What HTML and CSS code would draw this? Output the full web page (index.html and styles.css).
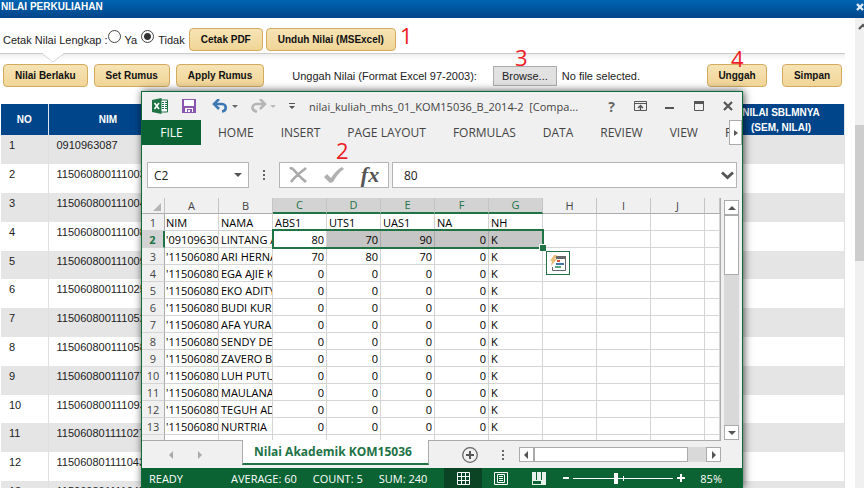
FILE: index.html
```html
<!DOCTYPE html>
<html lang="id">
<head>
  <meta charset="UTF-8" />
  <meta name="viewport" content="width=device-width, initial-scale=1.0"/>
  <title>Nilai Perkuliahan</title>
  <link rel="stylesheet" href="styles.css">
</head>
<body>
  <header class="titlebar">
    <h1>NILAI PERKULIAHAN</h1>
    <button class="close-page" aria-label="Tutup">
      <svg width="8" height="8" viewBox="0 0 8 8"><path d="M1 1l6 6M7 1l-6 6" stroke="#e4edf6" stroke-width="2.4"/></svg>
    </button>
  </header>

  <div class="content">
    <main class="page">
      <form class="toolbar print-bar">
        <span class="lbl">Cetak Nilai Lengkap :</span>
        <input type="radio" name="lengkap" id="ya"><label for="ya">Ya</label>
        <input type="radio" name="lengkap" id="tidak" checked><label for="tidak">Tidak</label>
        <button type="button" class="btn">Cetak PDF</button>
        <button type="button" class="btn">Unduh Nilai (MSExcel)</button>
        <svg class="notch" width="22" height="10" viewBox="0 0 22 10"><path d="M0 0h22L11 9z" fill="#fff"/><path d="M0 .5L11 9L22 .5" fill="none" stroke="#d5d5d5"/></svg>
      </form>

      <form class="toolbar upload-bar">
        <button type="button" class="btn">Nilai Berlaku</button>
        <button type="button" class="btn">Set Rumus</button>
        <button type="button" class="btn">Apply Rumus</button>
        <span class="upload-label">Unggah Nilai (Format Excel 97-2003):</span>
        <label class="browse" for="berkas">Browse...</label>
        <input type="file" id="berkas" class="file-input">
        <span class="file-name">No file selected.</span>
        <button type="button" class="btn small unggah">Unggah</button>
        <button type="button" class="btn small">Simpan</button>
      </form>

      <table class="grades">
        <colgroup><col class="c-no"><col class="c-nim"><col><col class="c-prev"></colgroup>
        <thead>
          <tr><th>NO</th><th>NIM</th><th></th><th>NILAI SBLMNYA<br>(SEM, NILAI)</th></tr>
        </thead>
        <tbody>
          <tr><td>1</td><td>0910963087</td><td></td><td></td></tr>
          <tr><td>2</td><td>115060800111003</td><td></td><td></td></tr>
          <tr><td>3</td><td>115060800111004</td><td></td><td></td></tr>
          <tr><td>4</td><td>115060800111008</td><td></td><td></td></tr>
          <tr><td>5</td><td>115060800111009</td><td></td><td></td></tr>
          <tr><td>6</td><td>115060800111025</td><td></td><td></td></tr>
          <tr><td>7</td><td>115060800111052</td><td></td><td></td></tr>
          <tr><td>8</td><td>115060800111058</td><td></td><td></td></tr>
          <tr><td>9</td><td>115060800111077</td><td></td><td></td></tr>
          <tr><td>10</td><td>115060800111093</td><td></td><td></td></tr>
          <tr><td>11</td><td>115060801111027</td><td></td><td></td></tr>
          <tr><td>12</td><td>115060801111043</td><td></td><td></td></tr>
          <tr><td>13</td><td>115060801111045</td><td></td><td></td></tr>
        </tbody>
      </table>
    </main>

    <div class="page-scroll">
      <svg width="9" height="18" viewBox="0 0 9 18"><path d="M4 11l4-4 4 4" fill="none" stroke="#555" stroke-width="2.2"/></svg>
      <div class="page-thumb"></div>
    </div>
  </div>

  <!-- Excel window -->
  <section class="excel">
    <div class="x-title">
      <span class="x-ico">
        <svg width="16" height="16" viewBox="0 0 16 16"><path d="M9 2h6.500v12H9" fill="#fff" stroke="#1f7244"/><path d="M10 4.500h2M13 4.500h2M10 6.500h2M13 6.500h2M10 8.500h2M13 8.500h2M10 10.500h2M13 10.500h2" stroke="#1f7244" stroke-width="1.200"/><path d="M0 2l9.500-2v16L0 14z" fill="#1f7244"/><path d="M2.500 5l4.500 6M7 5l-4.500 6" stroke="#fff" stroke-width="1.600"/></svg>
      </span>
      <button class="x-ico" aria-label="Save">
        <svg width="14" height="14" viewBox="0 0 14 14"><path d="M0 0h14v14H0z" fill="#8a56b0"/><path d="M2 1h10v6H2zM3 9h8v4H3z" fill="#fff"/><path d="M5 10h5v3H8v-2H6v2H5z" fill="#8a56b0"/></svg>
      </button>
      <button class="x-ico undo" aria-label="Undo">
        <svg width="17" height="14" viewBox="0 0 17 14"><path d="M2 5h8c5 0 5 7 0 7.500" fill="none" stroke="#3e78b4" stroke-width="2.600"/><path d="M7 0L2 5l5 5" fill="none" stroke="#3e78b4" stroke-width="2.600"/></svg>
        <svg width="6" height="3" viewBox="0 0 6 3"><path d="M0 0h6L3 3z" fill="#666"/></svg>
      </button>
      <button class="x-ico redo" aria-label="Redo">
        <svg width="17" height="14" viewBox="0 0 17 14"><path d="M14 5H7c-6 0-6 7 0 7.500" fill="none" stroke="#b5b5b5" stroke-width="2.600"/><path d="M10 0l5 5-5 5" fill="none" stroke="#b5b5b5" stroke-width="2.600"/></svg>
        <svg width="6" height="3" viewBox="0 0 6 3"><path d="M0 0h6L3 3z" fill="#bbb"/></svg>
      </button>
      <button class="x-ico customize" aria-label="Customize">
        <svg width="6" height="6" viewBox="0 0 6 6"><path d="M0 0h6v1H0zM0 3h6L3 6z" fill="#555"/></svg>
      </button>
      <span class="x-name">nilai_kuliah_mhs_01_KOM15036_B_2014-2&nbsp; [Compa...</span>
      <div class="x-window-btns">
        <button class="x-ico help" aria-label="Help">?</button>
        <button class="x-ico" aria-label="Ribbon options"><svg width="13" height="10" viewBox="0 0 13 10"><path d="M.5.5h12v9H.5zM.5 2.500h12" fill="none" stroke="#555"/><path d="M6.500 9V4.500M4 7l2.500-2.500L9 7" fill="none" stroke="#555" stroke-width="1.300"/></svg></button>
        <button class="x-ico" aria-label="Minimize"><svg width="10" height="10" viewBox="0 0 10 10"><path d="M0 6h9v2H0z" fill="#555"/></svg></button>
        <button class="x-ico" aria-label="Maximize"><svg width="10" height="10" viewBox="0 0 10 10"><path d="M.5.5h9v9h-9z" fill="none" stroke="#555"/><path d="M0 0h10v3H0z" fill="#555"/></svg></button>
        <button class="x-ico" aria-label="Close"><svg width="10" height="10" viewBox="0 0 10 10"><path d="M1 1l8 8M9 1L1 9" stroke="#555" stroke-width="2.200"/></svg></button>
      </div>
    </div>

    <div class="x-ribbon">
      <nav class="x-tabs">
        <button class="file">FILE</button>
        <button>HOME</button>
        <button>INSERT</button>
        <button>PAGE LAYOUT</button>
        <button>FORMULAS</button>
        <button>DATA</button>
        <button>REVIEW</button>
        <button>VIEW</button>
        <button>F</button>
      </nav>
      <button class="x-more" aria-label="More tabs"><svg width="4" height="6" viewBox="0 0 4 6"><path d="M0 0l4 3-4 3z" fill="#555"/></svg></button>
    </div>

    <div class="x-formula">
      <div class="x-box name-box">
        <input type="text" value="C2" aria-label="Name box">
        <svg width="8" height="4" viewBox="0 0 8 4"><path d="M0 0h8L4 4z" fill="#555"/></svg>
      </div>
      <svg class="dots" width="2" height="10" viewBox="0 0 2 10"><path d="M0 0h2v2H0zM0 4h2v2H0zM0 8h2v2H0z" fill="#666"/></svg>
      <div class="x-box fx-box">
        <button aria-label="Cancel"><svg width="18" height="16" viewBox="0 0 18 16"><path d="M1 2c2-2 3 0 8 5.500S16 14 17 15M17 1C12 5 6 9 2 15" fill="none" stroke="#aaa" stroke-width="2.600"/></svg></button>
        <button aria-label="Enter"><svg width="20" height="16" viewBox="0 0 20 16"><path d="M0 10l3-3 4 4C10 6 14 2 18 0l2 2c-5 3-8 8-11 13l-3 1z" fill="#b0b0b0"/></svg></button>
        <button class="fx" aria-label="Insert function"><i>fx</i></button>
      </div>
      <div class="x-box value-box">
        <input type="text" value="80" aria-label="Formula">
        <svg width="13" height="9" viewBox="0 0 13 9"><path d="M1 1.500l5.500 5 5.500-5" fill="none" stroke="#555" stroke-width="2.800"/></svg>
      </div>
    </div>

    <div class="x-body">
      <div class="x-grid">
        <table class="sheet">
          <colgroup><col class="gutter"><col span="10" class="cell"><col></colgroup>
          <thead>
            <tr><th class="corner"><svg width="8" height="8" viewBox="0 0 8 8"><path d="M8 0v8H0z" fill="#b5b5b5"/></svg></th><th>A</th><th>B</th><th class="on">C</th><th class="on">D</th><th class="on">E</th><th class="on">F</th><th class="on">G</th><th>H</th><th>I</th><th>J</th><th></th></tr>
          </thead>
          <tbody>
            <tr class="names"><th>1</th><td>NIM</td><td>NAMA</td><td>ABS1</td><td>UTS1</td><td>UAS1</td><td>NA</td><td>NH</td><td></td><td></td><td></td><td></td></tr>
            <tr class="picked"><th>2</th><td>'09109630</td><td>LINTANG A</td><td>80</td><td>70</td><td>90</td><td>0</td><td>K</td><td></td><td></td><td></td><td></td></tr>
            <tr><th>3</th><td>'11506080</td><td>ARI HERNA</td><td>70</td><td>80</td><td>70</td><td>0</td><td>K</td><td></td><td></td><td></td><td></td></tr>
            <tr><th>4</th><td>'11506080</td><td>EGA AJIE K</td><td>0</td><td>0</td><td>0</td><td>0</td><td>K</td><td></td><td></td><td></td><td></td></tr>
            <tr><th>5</th><td>'11506080</td><td>EKO ADITY</td><td>0</td><td>0</td><td>0</td><td>0</td><td>K</td><td></td><td></td><td></td><td></td></tr>
            <tr><th>6</th><td>'11506080</td><td>BUDI KUR</td><td>0</td><td>0</td><td>0</td><td>0</td><td>K</td><td></td><td></td><td></td><td></td></tr>
            <tr><th>7</th><td>'11506080</td><td>AFA YURA</td><td>0</td><td>0</td><td>0</td><td>0</td><td>K</td><td></td><td></td><td></td><td></td></tr>
            <tr><th>8</th><td>'11506080</td><td>SENDY DE</td><td>0</td><td>0</td><td>0</td><td>0</td><td>K</td><td></td><td></td><td></td><td></td></tr>
            <tr><th>9</th><td>'11506080</td><td>ZAVERO B</td><td>0</td><td>0</td><td>0</td><td>0</td><td>K</td><td></td><td></td><td></td><td></td></tr>
            <tr><th>10</th><td>'11506080</td><td>LUH PUTU</td><td>0</td><td>0</td><td>0</td><td>0</td><td>K</td><td></td><td></td><td></td><td></td></tr>
            <tr><th>11</th><td>'11506080</td><td>MAULANA</td><td>0</td><td>0</td><td>0</td><td>0</td><td>K</td><td></td><td></td><td></td><td></td></tr>
            <tr><th>12</th><td>'11506080</td><td>TEGUH AD</td><td>0</td><td>0</td><td>0</td><td>0</td><td>K</td><td></td><td></td><td></td><td></td></tr>
            <tr><th>13</th><td>'11506080</td><td>NURTRIA</td><td>0</td><td>0</td><td>0</td><td>0</td><td>K</td><td></td><td></td><td></td><td></td></tr>
            <tr><th></th><td></td><td></td><td></td><td></td><td></td><td></td><td></td><td></td><td></td><td></td><td></td></tr>
          </tbody>
        </table>
        <div class="selection"></div>
        <button class="quick" aria-label="Quick analysis">
          <svg width="16" height="16" viewBox="0 0 16 16"><path d="M5 2h10.500v13.500h-13V12" fill="#fff" stroke="#666"/><path d="M6 1h10v3H6z" fill="#666"/><path d="M7 5h3v2H7z" fill="#d9532c"/><path d="M6 8h8v2H6z" fill="#3e78b4"/><path d="M5 11h6v2H5z" fill="#5aa583"/><path d="M4 0h3L5 4h2L1 11l1-5H0z" fill="#e9c07a"/></svg>
        </button>
      </div>
      <div class="v-scroll">
        <button aria-label="Scroll up"><svg width="8" height="4" viewBox="0 0 8 4"><path d="M0 4h8L4 0z" fill="#555"/></svg></button>
        <div class="v-thumb"></div>
        <button class="last" aria-label="Scroll down"><svg width="8" height="4" viewBox="0 0 8 4"><path d="M0 0h8L4 4z" fill="#555"/></svg></button>
      </div>
    </div>

    <div class="x-sheets">
      <div class="x-arrows">
        <svg width="4" height="8" viewBox="0 0 4 8"><path d="M4 0v8L0 4z" fill="#aaa"/></svg>
        <svg width="4" height="8" viewBox="0 0 4 8"><path d="M0 0v8l4-4z" fill="#aaa"/></svg>
      </div>
      <button class="sheet-tab">Nilai Akademik KOM15036</button>
      <button class="add" aria-label="New sheet"><svg width="16" height="16" viewBox="0 0 16 16"><circle cx="8" cy="8" r="7.300" fill="none" stroke="#666" stroke-width="1.300"/><path d="M4 8h8M8 4v8" stroke="#555" stroke-width="2"/></svg></button>
      <svg class="dots" width="2" height="10" viewBox="0 0 2 10"><path d="M0 0h2v2H0zM0 4h2v2H0zM0 8h2v2H0z" fill="#666"/></svg>
      <div class="h-scroll">
        <button aria-label="Scroll left"><svg width="4" height="8" viewBox="0 0 4 8"><path d="M4 0v8L0 4z" fill="#555"/></svg></button>
        <div class="h-thumb"></div>
        <button aria-label="Scroll right"><svg width="4" height="8" viewBox="0 0 4 8"><path d="M0 0v8l4-4z" fill="#555"/></svg></button>
      </div>
    </div>

    <div class="x-status">
      <span class="ready">READY</span>
      <div class="sums"><span>AVERAGE: 60</span><span>COUNT: 5</span><span>SUM: 240</span></div>
      <div class="views">
        <button class="active" aria-label="Normal"><svg width="13" height="13" viewBox="0 0 13 13"><path d="M.5.5h12v12H.5zM4.500 0v13M8.500 0v13M0 4.500h13M0 8.500h13" fill="none" stroke="#fff"/></svg></button>
        <button aria-label="Page layout"><svg width="14" height="13" viewBox="0 0 14 13"><path d="M.5.5h13v12H.5zM3.500 2.500h7v8h-7zM5 4.500h4M5 6.500h4M5 8.500h4" fill="none" stroke="#fff"/></svg></button>
        <button aria-label="Page break"><svg width="14" height="13" viewBox="0 0 14 13"><path d="M0 0h14v13H0z" fill="#e8f1ec"/><path d="M1 9h8v3H1zM4 0h1v8H4zM9 0h1v8H9z" fill="#0b6333"/></svg></button>
      </div>
      <div class="zoom">
        <svg width="6" height="10" viewBox="0 0 6 10"><path d="M0 4h6v2H0z" fill="#fff"/></svg>
        <input type="range" min="0" max="100" value="42" aria-label="Zoom">
        <svg width="8" height="10" viewBox="0 0 8 10"><path d="M0 4h8v2H0zM3 1h2v8H3z" fill="#fff"/></svg>
      </div>
      <span class="percent">85%</span>
    </div>
  </section>

  <!-- step numbers -->
  <span class="step s1">1</span>
  <span class="step s2">2</span>
  <span class="step s3">3</span>
  <span class="step s4">4</span>
</body>
</html>
```
FILE: styles.css
```css
:root {
  --blue: #004489;
  --green: #0b6333;
  --cell-green: #217346;
  --gray: #ababab;
  --line: #d4d4d4;
  --ui: "Open Sans", "Noto Sans", sans-serif;
}

* {
  box-sizing: border-box;
}

body {
  margin: 0;
  height: 100vh;
  display: flex;
  flex-direction: column;
  position: relative;
  overflow: hidden;
  background: #fff;
  color: #222;
  font-family: "Liberation Sans", Arial, sans-serif;
  font-size: 11px;
}

button {
  border: none;
  background: none;
  padding: 0;
  font-family: inherit;
  color: inherit;
  cursor: pointer;
}

svg {
  display: block;
  flex: none;
}

.titlebar {
  flex: none;
  display: flex;
  justify-content: space-between;
  height: 18px;
  padding-left: 1px;
  background: linear-gradient(#0065b3, var(--blue));
  color: #fff;
}

.titlebar h1 {
  margin: 0;
  font-size: 10px;
  line-height: 13px;
}

.close-page {
  height: 13px;
}

.content {
  flex: 1;
  min-height: 0;
  display: flex;
}

.page {
  flex: 1;
  min-width: 0;
  margin-right: 10px;
  overflow: hidden;
}

.toolbar {
  display: flex;
  align-items: center;
  position: relative;
}

.print-bar {
  height: 36px;
  padding: 8px 3px 0;
  border-bottom: 1px solid #ccc;
}

.notch {
  position: absolute;
  left: 42px;
  top: 35px;
  z-index: 1;
}

input[type="radio"] {
  appearance: none;
  width: 13px;
  height: 13px;
  margin: 0 4px 7px 0;
  border: 1px solid #444;
  border-radius: 50%;
  background: #fff;
}

input[type="radio"]:checked {
  background: radial-gradient(#333 0 3px, #fff 4px);
}

.print-bar label {
  margin-right: 4px;
}

.btn {
  height: 23px;
  padding: 0 11px;
  border: 1px solid #d2ab5f;
  border-radius: 4px;
  background: linear-gradient(#f6e3b5, #f1d597);
  color: #111;
  font-size: 10px;
  font-weight: bold;
  white-space: nowrap;
}

.print-bar .btn {
  margin-right: 3px;
}

.upload-bar {
  height: 50px;
  padding: 0 3px 7px;
  background: linear-gradient(#eee, #fff 6px);
}

.upload-bar .btn {
  margin-right: 6px;
}

.upload-label {
  margin: 0 16px 0 22px;
}

.browse {
  height: 20px;
  padding: 0 8px;
  border: 1px solid #adadad;
  background: #e1e1e1;
  line-height: 18px;
}

.file-input {
  position: absolute;
  width: 1px;
  height: 1px;
  opacity: 0;
}

.file-name {
  margin-left: 5px;
}

.upload-bar .small {
  width: 60px;
  padding: 0;
  margin-right: 0;
}

.upload-bar .unggah {
  margin: 0 15px 0 auto;
}

.grades {
  width: calc(100% - 1px);
  margin-left: 1px;
  border-collapse: collapse;
  table-layout: fixed;
}

.c-no { width: 47px; }
.c-nim { width: 120px; }
.c-prev { width: 127px; }

.grades th {
  height: 31px;
  padding: 0;
  background: var(--blue);
  color: #fff;
  font-size: 10px;
  line-height: 15px;
  border-right: 1px solid #dde6ef;
}

.grades td {
  height: 29px;
  padding: 4px 8px 0;
  vertical-align: top;
  line-height: 12px;
  border-right: 1px solid #e0e0e0;
}

.grades tr:nth-child(5n) td {
  height: 28px;
}

.grades tbody tr:nth-child(odd) {
  background: #e5e5e5;
}

.page-scroll {
  width: 9px;
  background: #f0f0f0;
}

.page-thumb {
  height: 136px;
  margin-top: 89px;
  background: #cdcdcd;
}

/* Excel window */
.excel {
  position: absolute;
  left: 141px;
  right: 121px;
  top: 91px;
  bottom: 0;
  display: flex;
  flex-direction: column;
  border: 1px solid #0c6b37;
  border-bottom: none;
  background: #f0f0f0;
  box-shadow: 1px 0 8px rgba(0, 0, 0, 0.7);
  color: #444;
  font-family: var(--ui);
}

.x-title {
  flex: none;
  display: flex;
  align-items: center;
  height: 28px;
  padding-left: 3px;
}

.x-ico {
  display: flex;
  align-items: center;
  justify-content: center;
  gap: 3px;
  width: 29px;
  height: 28px;
}

.undo { width: 44px; }
.redo { width: 32px; }
.customize { width: 26px; }

.x-name {
  margin-left: 4px;
  font-size: 11px;
  white-space: nowrap;
}

.x-window-btns {
  display: flex;
  margin-left: auto;
}

.help {
  color: #666;
  font-size: 14px;
  font-weight: bold;
}

.x-ribbon {
  flex: none;
  display: flex;
  height: 25px;
  margin-bottom: 17px;
}

.x-tabs {
  flex: 1;
  display: flex;
  min-width: 0;
  overflow: hidden;
}

.x-tabs button {
  flex: none;
  padding: 0 14px 0 13px;
  font-size: 12px;
  white-space: nowrap;
}

.x-tabs .file {
  width: 59px;
  margin-right: 4px;
  padding: 0;
  background: var(--green);
  color: #fff;
}

.x-more {
  display: flex;
  align-items: center;
  justify-content: center;
  width: 13px;
  border: 1px solid var(--gray);
  background: #fff;
}

.x-formula {
  flex: none;
  display: flex;
  align-items: center;
  height: 26px;
  margin: 0 5px 10px;
}

.x-box {
  display: flex;
  align-items: center;
  height: 26px;
  border: 1px solid #b5b5b5;
  background: #fff;
}

.x-box input {
  flex: 1;
  min-width: 0;
  border: none;
  outline: none;
  padding: 0;
  background: none;
  color: #222;
  font-family: inherit;
  font-size: 12px;
}

.name-box {
  width: 102px;
  padding: 0 6px;
}

.x-formula .dots {
  margin: 0 14px;
}

.fx-box {
  width: 110px;
  margin-right: 3px;
}

.fx-box button {
  flex: 1;
  display: flex;
  justify-content: center;
}

.fx {
  color: #555;
  font-family: "Liberation Serif", serif;
  font-size: 22px;
  font-weight: bold;
  line-height: 22px;
}

.value-box {
  flex: 1;
  padding: 0 2px 0 11px;
}

.x-body {
  flex: 1;
  min-height: 0;
  display: flex;
}

.x-grid {
  flex: 1;
  min-width: 0;
  position: relative;
  overflow: hidden;
  border-right: 1px solid var(--gray);
  background: #fff;
}

.sheet {
  width: 100%;
  border-collapse: separate;
  border-spacing: 0;
  table-layout: fixed;
  color: #000;
  font-size: 11px;
  line-height: 14px;
}

.sheet .gutter { width: 23px; }
.sheet .cell { width: 54px; }

.sheet th {
  height: 17px;
  padding: 2px 0 0;
  background: #f0f0f0;
  border-right: 1px solid var(--gray);
  border-bottom: 1px solid var(--line);
  color: #444;
  font-weight: normal;
}

.sheet thead th {
  height: 16px;
  padding: 0;
  border-right-color: #c4c4c4;
  border-bottom: 1px solid var(--gray);
}

.sheet thead .on {
  background: #d3d3d3;
  border-bottom: 2px solid var(--cell-green);
  color: var(--cell-green);
}

.corner svg {
  margin: 2px 3px 0 auto;
}

.sheet td {
  height: 17px;
  padding: 2px 2px 0;
  border-right: 1px solid var(--line);
  border-bottom: 1px solid var(--line);
  overflow: hidden;
  white-space: nowrap;
  text-align: right;
}

.sheet td:nth-child(2),
.sheet td:nth-child(3),
.sheet td:nth-child(8),
.sheet .names td {
  text-align: left;
}

.sheet td:nth-child(2) {
  padding: 2px 0 0 1px;
}

.picked td:nth-child(n+5):nth-child(-n+8) {
  background: #c6c6c6;
  border-right-color: #aaa;
}

.sheet .picked th {
  background: #d3d3d3;
  border-right: 2px solid var(--cell-green);
  color: var(--cell-green);
  font-weight: bold;
}

/* C2:G2 */
.selection {
  position: absolute;
  left: 130px;
  top: 31px;
  width: 272px;
  height: 20px;
  border: 2px solid var(--cell-green);
}

.selection::after {
  content: "";
  position: absolute;
  right: -4px;
  bottom: -4px;
  width: 6px;
  height: 6px;
  border: solid #fff;
  border-width: 1px 0 0 1px;
  background: var(--cell-green);
}

.quick {
  position: absolute;
  left: 404px;
  top: 53px;
  width: 24px;
  height: 24px;
  padding: 3px;
  border: 1px solid var(--cell-green);
  background: #fff;
}

.v-scroll {
  display: flex;
  flex-direction: column;
  width: 15px;
  margin: 2px 3px 0;
  background: #d9d9d9;
}

.v-scroll button,
.h-scroll button {
  display: flex;
  align-items: center;
  justify-content: center;
  width: 15px;
  height: 15px;
  border: 1px solid var(--gray);
  background: #fff;
}

.v-thumb {
  height: 60px;
  border: 1px solid var(--gray);
  background: #fff;
}

.v-scroll .last {
  margin-top: auto;
}

.x-sheets {
  flex: none;
  display: flex;
  height: 28px;
  align-items: center;
  border-top: 1px solid var(--gray);
  margin-right: 21px;
}

.x-arrows {
  display: flex;
  justify-content: center;
  gap: 25px;
  width: 100px;
  padding-right: 13px;
}

.sheet-tab {
  align-self: flex-start;
  height: 25px;
  margin-top: -1px;
  padding: 0 16px 0 11px;
  border: solid var(--gray);
  border-width: 0 1px;
  border-bottom: 2px solid var(--cell-green);
  background: #fff;
  color: var(--cell-green);
  font-size: 12px;
  font-weight: bold;
  white-space: nowrap;
}

.add {
  margin: 0 24px 0 33px;
}

.x-sheets .dots {
  margin-right: 15px;
}

.h-scroll {
  flex: 1;
  display: flex;
  background: #d9d9d9;
}

.h-thumb {
  flex: 1;
  margin-right: 18px;
  border: 1px solid var(--gray);
  background: #fff;
}

.x-status {
  flex: none;
  display: flex;
  align-items: center;
  height: 20px;
  padding: 0 20px 0 7px;
  background: var(--green);
  color: #fff;
  font-size: 11px;
}

.sums {
  display: flex;
  gap: 16px;
  margin-left: 48px;
}

.views {
  display: flex;
  align-self: stretch;
  margin-left: auto;
}

.views button {
  display: flex;
  align-items: center;
  justify-content: center;
  width: 38px;
}

.views .active {
  background: #0a4425;
}

.zoom {
  display: flex;
  align-items: center;
  gap: 4px;
  margin: 0 15px 0 5px;
}

.zoom input {
  appearance: none;
  width: 100px;
  height: 11px;
  margin: 0;
  background:
    linear-gradient(#fff, #fff) 50px 3px / 1px 5px no-repeat,
    linear-gradient(#fff, #fff) 0 5px / 100% 1px no-repeat;
}

.zoom input::-webkit-slider-thumb {
  appearance: none;
  width: 4px;
  height: 11px;
  background: #fff;
}

/* red step numbers over the screen */
.step {
  position: absolute;
  color: #ed1c24;
  font-family: var(--ui);
  font-size: 22px;
  line-height: 24px;
}

.s1 { left: 400px; top: 23px; }
.s2 { left: 336px; top: 138px; }
.s3 { left: 515px; top: 45px; }
.s4 { left: 731px; top: 46px; }
```
